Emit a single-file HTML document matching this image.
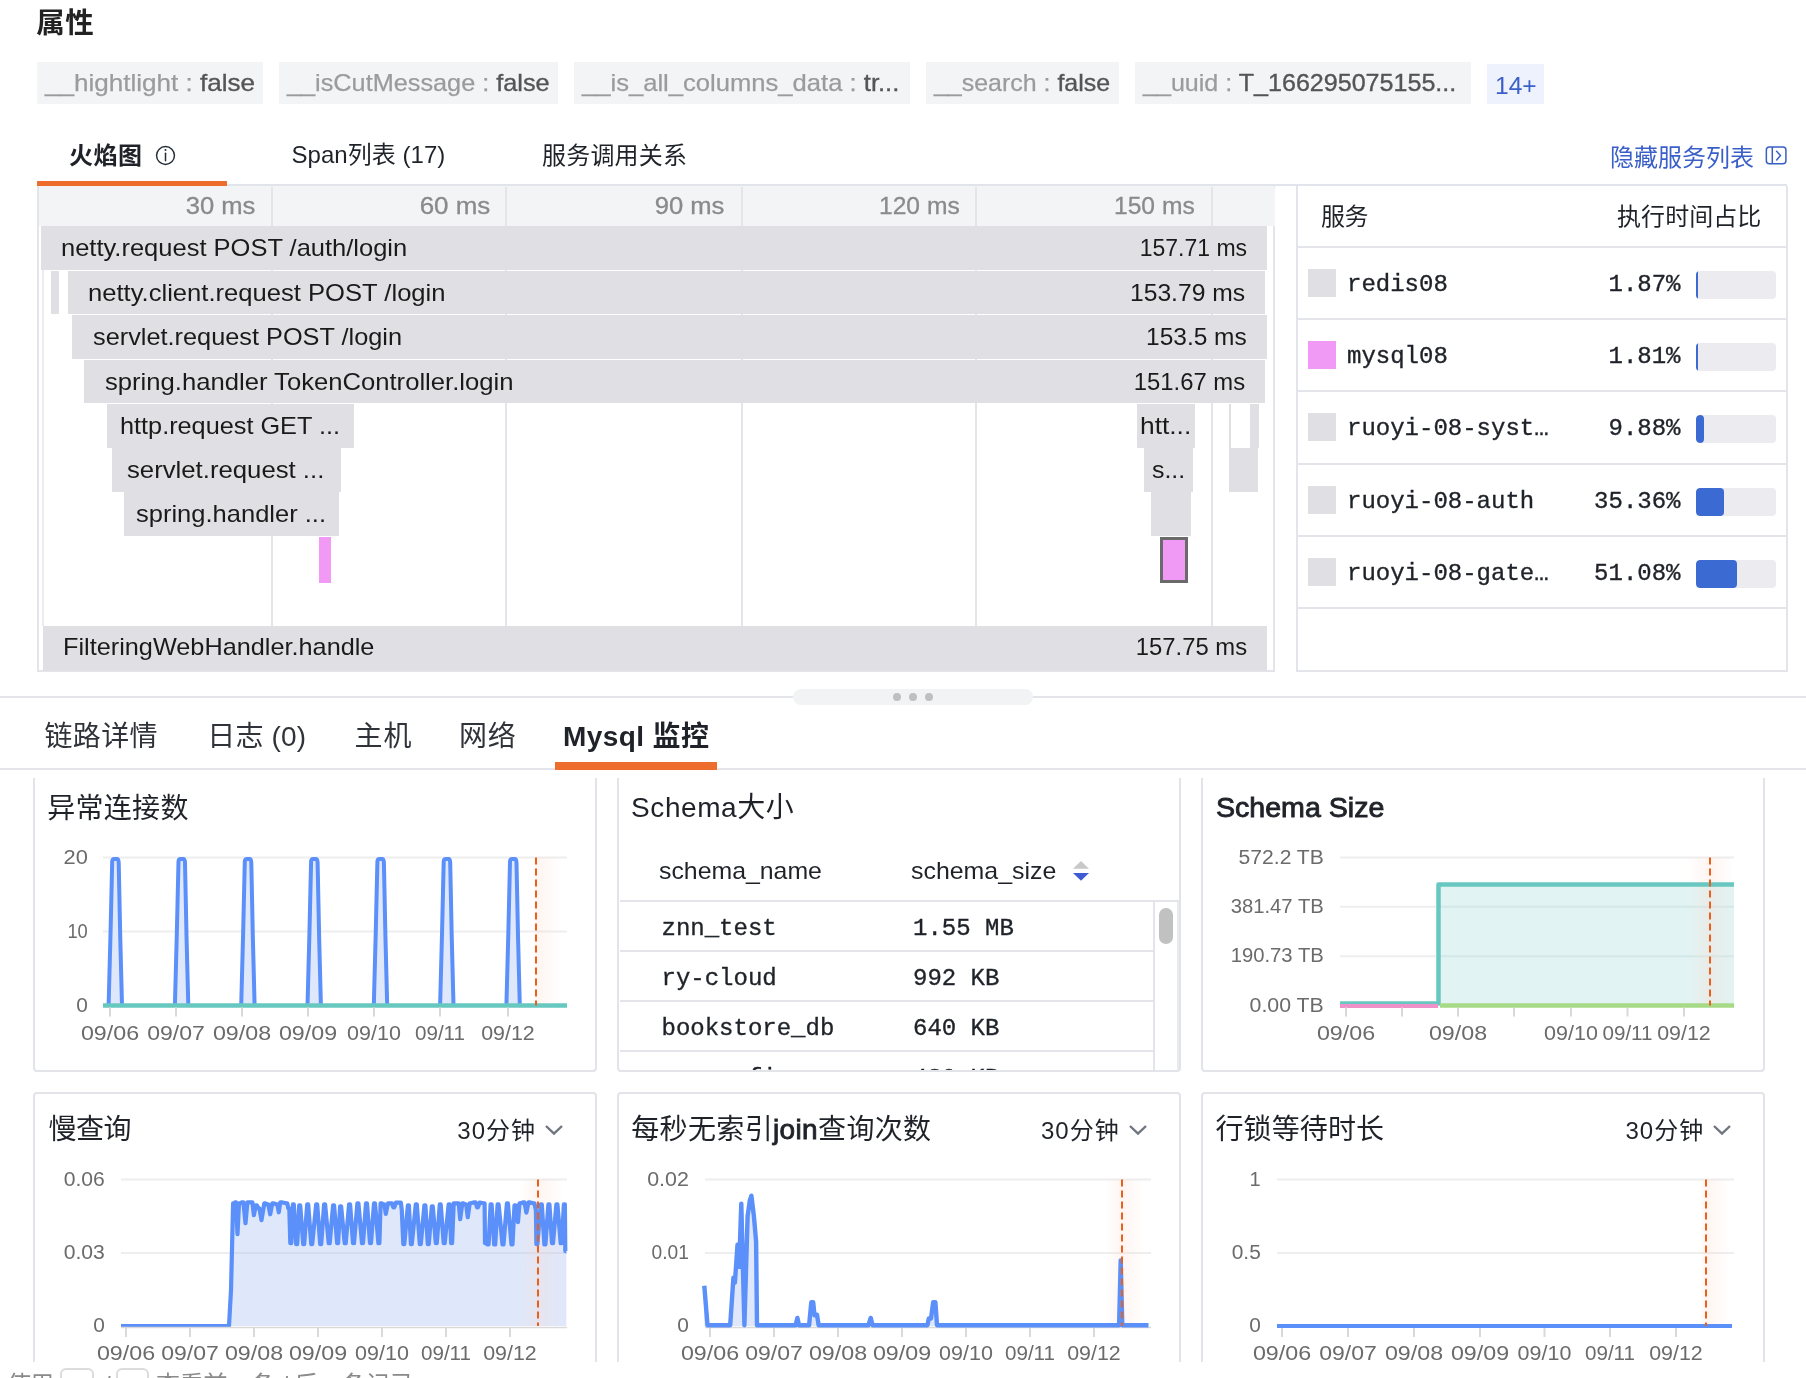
<!DOCTYPE html><html lang="zh"><head><meta charset="utf-8"><title>Trace</title><style>
*{box-sizing:border-box;margin:0;padding:0}
html,body{width:1806px;height:1378px;overflow:hidden;background:#fff}
body{position:relative;font-family:"Liberation Sans","Noto Sans CJK SC",sans-serif;color:#1f2329}
.a{position:absolute;white-space:nowrap}
.t{position:absolute;white-space:nowrap;transform-origin:0 50%}
.tr{position:absolute;white-space:nowrap;transform-origin:100% 50%}
.tag{position:absolute;top:62px;height:42px;background:#f3f4f6}
.k{color:#9b9b9b;-webkit-text-stroke:0.25px #9b9b9b} .v{color:#555;-webkit-text-stroke:0.35px #555}
.fb{position:absolute;background:#e0dfe4}
.gl{position:absolute;width:2px;background:#e4e4ea}
.mono{font-family:"Liberation Mono","DejaVu Sans Mono","Noto Sans CJK SC",monospace;-webkit-text-stroke:0.35px #1f2329}
.card{position:absolute;border:2px solid #e3e4ea;border-radius:4px;background:#fff}
.md{-webkit-text-stroke:0.9px #1f2329}
svg text{font-family:"Liberation Sans","Noto Sans CJK SC",sans-serif;font-size:20px;fill:#6b6b6b}
</style></head><body><div id="root" style="position:absolute;left:0;top:0;width:1806px;height:1378px;will-change:transform">
<div id="t1" class="t " style="top:2.5px;font-size:28.5px;line-height:40px;color:#1f2329;left:36.36px;letter-spacing:0.267px;font-weight:bold;color:#222;">属性</div>
<div class="tag" style="left:37px;width:226px"></div>
<div id="t2" class="t " style="top:63px;font-size:24px;line-height:40px;color:#1f2329;left:45.14px;transform:scaleX(1.0855);"><span class="k">__hightlight : </span><span class="v">false</span></div>
<div class="tag" style="left:279px;width:279px"></div>
<div id="t3" class="t " style="top:63px;font-size:24px;line-height:40px;color:#1f2329;left:286.94px;transform:scaleX(1.0527);"><span class="k">__isCutMessage : </span><span class="v">false</span></div>
<div class="tag" style="left:574px;width:336px"></div>
<div id="t4" class="t " style="top:63px;font-size:24px;line-height:40px;color:#1f2329;left:581.9399999999999px;transform:scaleX(1.0666);"><span class="k">__is_all_columns_data : </span><span class="v">tr...</span></div>
<div class="tag" style="left:926px;width:193px"></div>
<div id="t5" class="t " style="top:63px;font-size:24px;line-height:40px;color:#1f2329;left:934.04px;transform:scaleX(1.0394);"><span class="k">__search : </span><span class="v">false</span></div>
<div class="tag" style="left:1135px;width:336px"></div>
<div id="t6" class="t " style="top:63px;font-size:24px;line-height:40px;color:#1f2329;left:1143.14px;transform:scaleX(1.0447);"><span class="k">__uuid : </span><span class="v">T_166295075155...</span></div>
<div class="a" style="left:1487px;top:64px;width:57px;height:40px;background:#eef2fd"></div>
<div id="t7" class="t " style="top:66px;font-size:24px;line-height:40px;color:#3a5fc8;left:1494.64px;transform:scaleX(1.0246);">14+</div>
<div id="t8" class="t " style="top:138.5px;font-size:24px;line-height:34px;color:#1f2329;left:69.04px;letter-spacing:0.455px;font-weight:bold;">火焰图</div>
<svg class="a" style="left:155px;top:145px" width="22" height="22" viewBox="0 0 22 22"><circle cx="10.5" cy="10.5" r="8.95" fill="none" stroke="#252d36" stroke-width="1.45"/><line x1="10.5" y1="8.3" x2="10.5" y2="15.7" stroke="#252d36" stroke-width="1.5" stroke-linecap="round"/><circle cx="10.5" cy="5.1" r="1" fill="#252d36"/></svg>
<div id="t9" class="t " style="top:138px;font-size:24px;line-height:34px;color:#1f2329;left:291.44px;letter-spacing:0.051px;">Span列表 (17)</div>
<div id="t10" class="t " style="top:138.5px;font-size:24px;line-height:34px;color:#1f2329;left:542.04px;letter-spacing:0.184px;">服务调用关系</div>
<div id="t11" class="t " style="top:141px;font-size:24px;line-height:34px;color:#3a5fc8;left:1610.04px;letter-spacing:-0.016px;">隐藏服务列表</div>
<svg class="a" style="left:1765px;top:146px" width="22" height="20" viewBox="0 0 22 20"><rect x="1.35" y="1.05" width="19.55" height="16.7" rx="3" fill="none" stroke="#3a5fc4" stroke-width="1.5"/><line x1="7.3" y1="1.05" x2="7.3" y2="17.75" stroke="#3a5fc4" stroke-width="1.5"/><path d="M11.6 5.3 L15.5 9.6 L11.6 14" fill="none" stroke="#3a5fc4" stroke-width="1.5" stroke-linecap="round"/></svg>
<div class="a" style="left:37px;top:184px;width:1750px;height:2px;background:#e1e5eb"></div>
<div class="a" style="left:37px;top:181px;width:190px;height:5px;background:#ee6d2d"></div>
<div class="a" style="left:37px;top:186px;width:1238px;height:486px;border:2px solid #e4e5ea;border-top:none;background:#fff"></div>
<div class="a" style="left:39px;top:186px;width:1236px;height:40px;background:#f3f4f6;border-top-right-radius:3px"></div>
<div class="gl" style="left:271px;top:187px;height:483px"></div>
<div class="gl" style="left:505px;top:187px;height:483px"></div>
<div class="gl" style="left:741px;top:187px;height:483px"></div>
<div class="gl" style="left:975px;top:187px;height:483px"></div>
<div class="gl" style="left:1211px;top:187px;height:483px"></div>
<div class="gl" style="left:42px;top:270px;height:356px;background:#ececf0"></div>
<div id="t12" class="tr " style="top:186px;font-size:24px;line-height:39px;color:#8a8a8a;right:1550.6399999999999px;transform:scaleX(1.0667);-webkit-text-stroke:0.3px #8a8a8a;">30 ms</div>
<div id="t13" class="tr " style="top:186px;font-size:24px;line-height:39px;color:#8a8a8a;right:1315.6399999999999px;transform:scaleX(1.082);-webkit-text-stroke:0.3px #8a8a8a;">60 ms</div>
<div id="t14" class="tr " style="top:186px;font-size:24px;line-height:39px;color:#8a8a8a;right:1081.6399999999999px;transform:scaleX(1.0667);-webkit-text-stroke:0.3px #8a8a8a;">90 ms</div>
<div id="t15" class="tr " style="top:186px;font-size:24px;line-height:39px;color:#8a8a8a;right:846.64px;transform:scaleX(1.0256);-webkit-text-stroke:0.3px #8a8a8a;">120 ms</div>
<div id="t16" class="tr " style="top:186px;font-size:24px;line-height:39px;color:#8a8a8a;right:611.6400000000001px;transform:scaleX(1.0256);-webkit-text-stroke:0.3px #8a8a8a;">150 ms</div>
<div class="fb" style="left:41px;width:1226px;top:226.0px;height:44px"></div>
<div id="t17" class="t " style="top:226px;font-size:24px;line-height:43px;color:#1a1a1a;left:61.24px;transform:scaleX(1.0621);">netty.request POST /auth/login</div>
<div id="t18" class="tr " style="top:226px;font-size:24px;line-height:43px;color:#1a1a1a;right:559.3400000000001px;transform:scaleX(0.9584);">157.71 ms</div>
<div class="fb" style="left:51px;width:8px;top:271.0px;height:43px"></div>
<div class="fb" style="left:68px;width:1197px;top:271.0px;height:43px"></div>
<div id="t19" class="t " style="top:271px;font-size:24px;line-height:43px;color:#1a1a1a;left:88.14px;transform:scaleX(1.0663);">netty.client.request POST /login</div>
<div id="t20" class="tr " style="top:271px;font-size:24px;line-height:43px;color:#1a1a1a;right:561.24px;transform:scaleX(1.0271);">153.79 ms</div>
<div class="fb" style="left:72px;width:1195px;top:315.0px;height:44px"></div>
<div id="t21" class="t " style="top:315px;font-size:24px;line-height:43px;color:#1a1a1a;left:92.74px;transform:scaleX(1.0546);">servlet.request POST /login</div>
<div id="t22" class="tr " style="top:315px;font-size:24px;line-height:43px;color:#1a1a1a;right:559.3400000000001px;transform:scaleX(1.0193);">153.5 ms</div>
<div class="fb" style="left:84px;width:1181px;top:360.0px;height:43px"></div>
<div id="t23" class="t " style="top:360px;font-size:24px;line-height:43px;color:#1a1a1a;left:104.64px;transform:scaleX(1.0679);">spring.handler TokenController.login</div>
<div id="t24" class="tr " style="top:360px;font-size:24px;line-height:43px;color:#1a1a1a;right:561.24px;transform:scaleX(0.9932);">151.67 ms</div>
<div class="fb" style="left:107.3px;width:246.7px;top:404.0px;height:44px"></div>
<div id="t25" class="t " style="top:404px;font-size:24px;line-height:43px;color:#1a1a1a;left:120.44px;transform:scaleX(1.0527);">http.request GET ...</div>
<div class="fb" style="left:111.5px;width:229.0px;top:448.0px;height:44px"></div>
<div id="t26" class="t " style="top:448px;font-size:24px;line-height:43px;color:#1a1a1a;left:127.14px;transform:scaleX(1.0719);">servlet.request ...</div>
<div class="fb" style="left:124px;width:215.39999999999998px;top:492.0px;height:44px"></div>
<div id="t27" class="t " style="top:492px;font-size:24px;line-height:43px;color:#1a1a1a;left:136.44px;transform:scaleX(1.0629);">spring.handler ...</div>
<div class="fb" style="left:1137px;width:58px;top:404.0px;height:44px"></div>
<div id="t28" class="t " style="top:404px;font-size:24px;line-height:43px;color:#1a1a1a;left:1140.14px;transform:scaleX(1.0971);">htt...</div>
<div class="fb" style="left:1144px;width:49px;top:448.0px;height:44px"></div>
<div id="t29" class="t " style="top:448px;font-size:24px;line-height:43px;color:#1a1a1a;left:1152.14px;transform:scaleX(1.0376);">s...</div>
<div class="fb" style="left:1151.4px;width:39.59999999999991px;top:492.0px;height:44px"></div>
<div class="fb" style="left:1229px;width:2px;top:404.0px;height:44px"></div>
<div class="fb" style="left:1250px;width:9px;top:404.0px;height:44px"></div>
<div class="fb" style="left:1229px;width:29px;top:448.0px;height:44px"></div>
<div class="a" style="left:319.3px;top:537px;width:12px;height:46px;background:#f09af5"></div>
<div class="a" style="left:1160px;top:537px;width:28px;height:46px;background:#f09af5;border:3px solid #6a6a6a"></div>
<div class="fb" style="left:43px;width:1224px;top:626.0px;height:45px"></div>
<div id="t30" class="t " style="top:625px;font-size:24px;line-height:43px;color:#1a1a1a;left:63.34px;transform:scaleX(1.053);">FilteringWebHandler.handle</div>
<div id="t31" class="tr " style="top:625px;font-size:24px;line-height:43px;color:#1a1a1a;right:559.1400000000001px;transform:scaleX(0.9923);">157.75 ms</div>
<div class="a" style="left:1296px;top:186px;width:492px;height:486px;border:2px solid #e4e5ea;border-top:none;background:#fff"></div>
<div id="t32" class="t " style="top:200px;font-size:24px;line-height:34px;color:#1f2329;left:1321.04px;letter-spacing:-0.592px;">服务</div>
<div id="t33" class="t " style="top:200px;font-size:24px;line-height:34px;color:#1f2329;left:1617.04px;letter-spacing:0.062px;">执行时间占比</div>
<div class="a" style="left:1298px;top:246.0px;width:488px;height:2px;background:#e4e5ea"></div>
<div class="a" style="left:1308px;top:269.0px;width:28px;height:28px;background:#e0dfe4"></div>
<div class="a mono" style="left:1347px;top:267.0px;font-size:24px;line-height:36px;color:#1f2329">redis08</div>
<div class="a mono" style="left:1500px;width:180.5px;text-align:right;top:267.0px;font-size:24px;line-height:36px;color:#1f2329">1.87%</div>
<div class="a" style="left:1696px;top:271.0px;width:80px;height:28px;background:#ebebf0;border-radius:4px;overflow:hidden"><div style="width:1.5px;height:28px;background:#3b6ad2;border-radius:0"></div></div>
<div class="a" style="left:1298px;top:318.2px;width:488px;height:2px;background:#e4e5ea"></div>
<div class="a" style="left:1308px;top:341.2px;width:28px;height:28px;background:#f09af5"></div>
<div class="a mono" style="left:1347px;top:339.2px;font-size:24px;line-height:36px;color:#1f2329">mysql08</div>
<div class="a mono" style="left:1500px;width:180.5px;text-align:right;top:339.2px;font-size:24px;line-height:36px;color:#1f2329">1.81%</div>
<div class="a" style="left:1696px;top:343.2px;width:80px;height:28px;background:#ebebf0;border-radius:4px;overflow:hidden"><div style="width:1.5px;height:28px;background:#3b6ad2;border-radius:0"></div></div>
<div class="a" style="left:1298px;top:390.4px;width:488px;height:2px;background:#e4e5ea"></div>
<div class="a" style="left:1308px;top:413.4px;width:28px;height:28px;background:#e0dfe4"></div>
<div class="a mono" style="left:1347px;top:411.4px;font-size:24px;line-height:36px;color:#1f2329">ruoyi-08-syst…</div>
<div class="a mono" style="left:1500px;width:180.5px;text-align:right;top:411.4px;font-size:24px;line-height:36px;color:#1f2329">9.88%</div>
<div class="a" style="left:1696px;top:415.4px;width:80px;height:28px;background:#ebebf0;border-radius:4px;overflow:hidden"><div style="width:7.9px;height:28px;background:#3b6ad2;border-radius:4px"></div></div>
<div class="a" style="left:1298px;top:462.6px;width:488px;height:2px;background:#e4e5ea"></div>
<div class="a" style="left:1308px;top:485.6px;width:28px;height:28px;background:#e0dfe4"></div>
<div class="a mono" style="left:1347px;top:483.6px;font-size:24px;line-height:36px;color:#1f2329">ruoyi-08-auth</div>
<div class="a mono" style="left:1500px;width:180.5px;text-align:right;top:483.6px;font-size:24px;line-height:36px;color:#1f2329">35.36%</div>
<div class="a" style="left:1696px;top:487.6px;width:80px;height:28px;background:#ebebf0;border-radius:4px;overflow:hidden"><div style="width:28.3px;height:28px;background:#3b6ad2;border-radius:4px"></div></div>
<div class="a" style="left:1298px;top:534.8px;width:488px;height:2px;background:#e4e5ea"></div>
<div class="a" style="left:1308px;top:557.8px;width:28px;height:28px;background:#e0dfe4"></div>
<div class="a mono" style="left:1347px;top:555.8px;font-size:24px;line-height:36px;color:#1f2329">ruoyi-08-gate…</div>
<div class="a mono" style="left:1500px;width:180.5px;text-align:right;top:555.8px;font-size:24px;line-height:36px;color:#1f2329">51.08%</div>
<div class="a" style="left:1696px;top:559.8px;width:80px;height:28px;background:#ebebf0;border-radius:4px;overflow:hidden"><div style="width:40.9px;height:28px;background:#3b6ad2;border-radius:4px"></div></div>
<div class="a" style="left:1298px;top:607.0px;width:488px;height:2px;background:#e4e5ea"></div>
<div class="a" style="left:0;top:696px;width:1806px;height:2px;background:#e4e5ea"></div>
<div class="a" style="left:793px;top:689px;width:240px;height:16px;background:#f2f3f5;border-radius:8px"></div>
<div class="a" style="left:893px;top:693px;width:8px;height:8px;border-radius:4px;background:#bfbfbf"></div>
<div class="a" style="left:909px;top:693px;width:8px;height:8px;border-radius:4px;background:#bfbfbf"></div>
<div class="a" style="left:925px;top:693px;width:8px;height:8px;border-radius:4px;background:#bfbfbf"></div>
<div id="t34" class="t " style="top:717px;font-size:28px;line-height:40px;color:#30343a;left:44.38px;letter-spacing:0.412px;">链路详情</div>
<div id="t35" class="t " style="top:717px;font-size:28px;line-height:40px;color:#30343a;left:207.18px;letter-spacing:0.205px;">日志 (0)</div>
<div id="t36" class="t " style="top:717px;font-size:28px;line-height:40px;color:#30343a;left:354.48px;letter-spacing:1.038px;">主机</div>
<div id="t37" class="t " style="top:717px;font-size:28px;line-height:40px;color:#30343a;left:458.88px;letter-spacing:0.935px;">网络</div>
<div id="t38" class="t " style="top:717px;font-size:28px;line-height:40px;color:#1f2329;left:562.88px;letter-spacing:0.428px;font-weight:bold;">Mysql 监控</div>
<div class="a" style="left:0;top:768px;width:1806px;height:2px;background:#e4e5ea"></div>
<div class="a" style="left:555px;top:762px;width:162px;height:8px;background:#ee6d2d"></div>
<div class="card" style="left:33px;top:778px;width:564px;height:294px;border-top:none;border-top-left-radius:0;border-top-right-radius:0"></div>
<div class="card" style="left:33px;top:1092px;width:564px;height:300px"></div>
<div class="card" style="left:617px;top:778px;width:564px;height:294px;border-top:none;border-top-left-radius:0;border-top-right-radius:0"></div>
<div class="card" style="left:617px;top:1092px;width:564px;height:300px"></div>
<div class="card" style="left:1201px;top:778px;width:564px;height:294px;border-top:none;border-top-left-radius:0;border-top-right-radius:0"></div>
<div class="card" style="left:1201px;top:1092px;width:564px;height:300px"></div>
<div id="t39" class="t " style="top:791px;font-size:28px;line-height:36px;color:#1f2329;left:47.28px;letter-spacing:0.282px;">异常连接数</div>
<div id="t40" class="t " style="top:790px;font-size:28px;line-height:36px;color:#1f2329;left:631.08px;letter-spacing:0.574px;">Schema大小</div>
<div id="t41" class="t md" style="top:789.5px;font-size:28px;line-height:36px;color:#1f2329;left:1216.08px;transform:scaleX(1.0204);">Schema Size</div>
<div id="t42" class="t " style="top:1112px;font-size:28px;line-height:36px;color:#1f2329;left:48.480000000000004px;letter-spacing:-0.484px;">慢查询</div>
<div id="t43" class="t " style="top:1112px;font-size:28px;line-height:36px;color:#1f2329;left:631.28px;letter-spacing:0.353px;">每秒无索引<span class="md">join</span>查询次数</div>
<div id="t44" class="t " style="top:1112px;font-size:28px;line-height:36px;color:#1f2329;left:1215.38px;letter-spacing:0.145px;">行锁等待时长</div>
<div id="t45" class="t " style="top:1115.5px;font-size:24px;line-height:30px;color:#1f2329;left:457.34000000000003px;letter-spacing:0.974px;">30分钟</div>
<svg class="a" style="left:543.5px;top:1123px" width="20" height="14" viewBox="0 0 20 14"><path d="M2 3 L10 10.7 L18 3" fill="none" stroke="#6f7680" stroke-width="2.4"/></svg>
<div id="t46" class="t " style="top:1115.5px;font-size:24px;line-height:30px;color:#1f2329;left:1041.04px;letter-spacing:0.974px;">30分钟</div>
<svg class="a" style="left:1127.5px;top:1123px" width="20" height="14" viewBox="0 0 20 14"><path d="M2 3 L10 10.7 L18 3" fill="none" stroke="#6f7680" stroke-width="2.4"/></svg>
<div id="t47" class="t " style="top:1115.5px;font-size:24px;line-height:30px;color:#1f2329;left:1625.54px;letter-spacing:0.974px;">30分钟</div>
<svg class="a" style="left:1711.5px;top:1123px" width="20" height="14" viewBox="0 0 20 14"><path d="M2 3 L10 10.7 L18 3" fill="none" stroke="#6f7680" stroke-width="2.4"/></svg>
<svg class="a" style="left:0;top:0" width="1806" height="1378" viewBox="0 0 1806 1378"><line x1="103" y1="857.5" x2="567" y2="857.5" stroke="#eeeeee" stroke-width="2"/><line x1="103" y1="931.5" x2="567" y2="931.5" stroke="#eeeeee" stroke-width="2"/><text x="87.8" y="863.5" text-anchor="end" textLength="24.3" lengthAdjust="spacingAndGlyphs">20</text><text x="87.8" y="937.5" text-anchor="end" textLength="20.4" lengthAdjust="spacingAndGlyphs">10</text><text x="87.8" y="1011.5" text-anchor="end" textLength="11.6" lengthAdjust="spacingAndGlyphs">0</text><defs><linearGradient id="g536" x1="0" x2="1" y1="0" y2="0"><stop offset="0" stop-color="#fbd9cc" stop-opacity="0"/><stop offset="0.07" stop-color="#fbd9cc" stop-opacity="0.28"/><stop offset="1" stop-color="#fbd9cc" stop-opacity="0"/></linearGradient></defs><rect x="534" y="857.5" width="28" height="148.0" fill="url(#g536)"/><path d="M108.6 1005.5 L110.6 930.5 L112.2 861.5 Q112.4 859.0 114.4 859.0 L116.9 859.0 Q118.5 859.0 118.7 862.5 L120.2 935.5 L122.0 1005.5 Z" fill="#dfe8fb"/><path d="M108.6 1005.5 L110.6 930.5 L112.2 861.5 Q112.4 859.0 114.4 859.0 L116.9 859.0 Q118.5 859.0 118.7 862.5 L120.2 935.5 L122.0 1005.5" fill="none" stroke="#5b8ff9" stroke-width="4" stroke-linejoin="round"/><path d="M174.9 1005.5 L176.9 930.5 L178.5 861.5 Q178.7 859.0 180.7 859.0 L183.2 859.0 Q184.8 859.0 185.0 862.5 L186.5 935.5 L188.3 1005.5 Z" fill="#dfe8fb"/><path d="M174.9 1005.5 L176.9 930.5 L178.5 861.5 Q178.7 859.0 180.7 859.0 L183.2 859.0 Q184.8 859.0 185.0 862.5 L186.5 935.5 L188.3 1005.5" fill="none" stroke="#5b8ff9" stroke-width="4" stroke-linejoin="round"/><path d="M241.2 1005.5 L243.2 930.5 L244.8 861.5 Q245.0 859.0 247.0 859.0 L249.5 859.0 Q251.1 859.0 251.3 862.5 L252.8 935.5 L254.6 1005.5 Z" fill="#dfe8fb"/><path d="M241.2 1005.5 L243.2 930.5 L244.8 861.5 Q245.0 859.0 247.0 859.0 L249.5 859.0 Q251.1 859.0 251.3 862.5 L252.8 935.5 L254.6 1005.5" fill="none" stroke="#5b8ff9" stroke-width="4" stroke-linejoin="round"/><path d="M307.5 1005.5 L309.5 930.5 L311.1 861.5 Q311.3 859.0 313.3 859.0 L315.8 859.0 Q317.4 859.0 317.6 862.5 L319.1 935.5 L320.9 1005.5 Z" fill="#dfe8fb"/><path d="M307.5 1005.5 L309.5 930.5 L311.1 861.5 Q311.3 859.0 313.3 859.0 L315.8 859.0 Q317.4 859.0 317.6 862.5 L319.1 935.5 L320.9 1005.5" fill="none" stroke="#5b8ff9" stroke-width="4" stroke-linejoin="round"/><path d="M373.8 1005.5 L375.8 930.5 L377.4 861.5 Q377.6 859.0 379.6 859.0 L382.1 859.0 Q383.7 859.0 383.9 862.5 L385.4 935.5 L387.2 1005.5 Z" fill="#dfe8fb"/><path d="M373.8 1005.5 L375.8 930.5 L377.4 861.5 Q377.6 859.0 379.6 859.0 L382.1 859.0 Q383.7 859.0 383.9 862.5 L385.4 935.5 L387.2 1005.5" fill="none" stroke="#5b8ff9" stroke-width="4" stroke-linejoin="round"/><path d="M440.1 1005.5 L442.1 930.5 L443.7 861.5 Q443.9 859.0 445.9 859.0 L448.4 859.0 Q450.0 859.0 450.2 862.5 L451.7 935.5 L453.5 1005.5 Z" fill="#dfe8fb"/><path d="M440.1 1005.5 L442.1 930.5 L443.7 861.5 Q443.9 859.0 445.9 859.0 L448.4 859.0 Q450.0 859.0 450.2 862.5 L451.7 935.5 L453.5 1005.5" fill="none" stroke="#5b8ff9" stroke-width="4" stroke-linejoin="round"/><path d="M506.4 1005.5 L508.4 930.5 L510.0 861.5 Q510.2 859.0 512.2 859.0 L514.7 859.0 Q516.3 859.0 516.5 862.5 L518.0 935.5 L519.8 1005.5 Z" fill="#dfe8fb"/><path d="M506.4 1005.5 L508.4 930.5 L510.0 861.5 Q510.2 859.0 512.2 859.0 L514.7 859.0 Q516.3 859.0 516.5 862.5 L518.0 935.5 L519.8 1005.5" fill="none" stroke="#5b8ff9" stroke-width="4" stroke-linejoin="round"/><line x1="103" y1="1005.5" x2="567" y2="1005.5" stroke="#67c8c0" stroke-width="4.5"/><line x1="110" y1="1007.5" x2="110" y2="1016.5" stroke="#d9d9d9" stroke-width="2"/><text x="110" y="1040" text-anchor="middle" textLength="58.2" lengthAdjust="spacingAndGlyphs">09/06</text><line x1="176" y1="1007.5" x2="176" y2="1016.5" stroke="#d9d9d9" stroke-width="2"/><text x="176" y="1040" text-anchor="middle" textLength="57.6" lengthAdjust="spacingAndGlyphs">09/07</text><line x1="242" y1="1007.5" x2="242" y2="1016.5" stroke="#d9d9d9" stroke-width="2"/><text x="242" y="1040" text-anchor="middle" textLength="58.2" lengthAdjust="spacingAndGlyphs">09/08</text><line x1="308" y1="1007.5" x2="308" y2="1016.5" stroke="#d9d9d9" stroke-width="2"/><text x="308" y="1040" text-anchor="middle" textLength="58.2" lengthAdjust="spacingAndGlyphs">09/09</text><line x1="374" y1="1007.5" x2="374" y2="1016.5" stroke="#d9d9d9" stroke-width="2"/><text x="374" y="1040" text-anchor="middle" textLength="53.8" lengthAdjust="spacingAndGlyphs">09/10</text><line x1="440" y1="1007.5" x2="440" y2="1016.5" stroke="#d9d9d9" stroke-width="2"/><text x="440" y="1040" text-anchor="middle" textLength="50.1" lengthAdjust="spacingAndGlyphs">09/11</text><line x1="508" y1="1007.5" x2="508" y2="1016.5" stroke="#d9d9d9" stroke-width="2"/><text x="508" y="1040" text-anchor="middle" textLength="53.6" lengthAdjust="spacingAndGlyphs">09/12</text><line x1="536" y1="857.5" x2="536" y2="1005.5" stroke="#e8601c" stroke-width="2" stroke-dasharray="7 4"/><path d="M1438.5 1005.5 L1438.5 884.5 L1734 884.5 L1734 1005.5 Z" fill="#e2f3f3"/><line x1="1340" y1="857.5" x2="1734" y2="857.5" stroke="#eeeeee" stroke-width="2"/><line x1="1340" y1="906.7" x2="1438" y2="906.7" stroke="#eeeeee" stroke-width="2"/><line x1="1438" y1="906.7" x2="1734" y2="906.7" stroke="#d3e8e8" stroke-width="2"/><line x1="1340" y1="956.3" x2="1438" y2="956.3" stroke="#eeeeee" stroke-width="2"/><line x1="1438" y1="956.3" x2="1734" y2="956.3" stroke="#d3e8e8" stroke-width="2"/><text x="1323.8" y="863.5" text-anchor="end" textLength="85.2" lengthAdjust="spacingAndGlyphs">572.2 TB</text><text x="1323.8" y="912.7" text-anchor="end" textLength="93.1" lengthAdjust="spacingAndGlyphs">381.47 TB</text><text x="1323.8" y="962.3" text-anchor="end" textLength="93.1" lengthAdjust="spacingAndGlyphs">190.73 TB</text><text x="1323.8" y="1011.5" text-anchor="end" textLength="74.2" lengthAdjust="spacingAndGlyphs">0.00 TB</text><defs><linearGradient id="g1710" x1="0" x2="1" y1="0" y2="0"><stop offset="0" stop-color="#fbd9cc" stop-opacity="0"/><stop offset="0.48" stop-color="#fbd9cc" stop-opacity="0.28"/><stop offset="1" stop-color="#fbd9cc" stop-opacity="0"/></linearGradient></defs><rect x="1688" y="857.5" width="46" height="148.0" fill="url(#g1710)"/><path d="M1340 1003.5 L1438.5 1003.5 L1438.5 884.5 L1734 884.5" fill="none" stroke="#68c7c0" stroke-width="4.5" stroke-linejoin="round"/><line x1="1340" y1="1006" x2="1438" y2="1006" stroke="#f191c9" stroke-width="4"/><line x1="1440" y1="1005.5" x2="1734" y2="1005.5" stroke="#a6da86" stroke-width="4.5"/><line x1="1346" y1="1007.5" x2="1346" y2="1016.5" stroke="#d9d9d9" stroke-width="2"/><text x="1346" y="1040" text-anchor="middle" textLength="58.2" lengthAdjust="spacingAndGlyphs">09/06</text><line x1="1402" y1="1007.5" x2="1402" y2="1016.5" stroke="#d9d9d9" stroke-width="2"/><line x1="1458" y1="1007.5" x2="1458" y2="1016.5" stroke="#d9d9d9" stroke-width="2"/><text x="1458" y="1040" text-anchor="middle" textLength="58.2" lengthAdjust="spacingAndGlyphs">09/08</text><line x1="1514" y1="1007.5" x2="1514" y2="1016.5" stroke="#d9d9d9" stroke-width="2"/><line x1="1571" y1="1007.5" x2="1571" y2="1016.5" stroke="#d9d9d9" stroke-width="2"/><text x="1571" y="1040" text-anchor="middle" textLength="53.8" lengthAdjust="spacingAndGlyphs">09/10</text><line x1="1627.5" y1="1007.5" x2="1627.5" y2="1016.5" stroke="#d9d9d9" stroke-width="2"/><text x="1627.5" y="1040" text-anchor="middle" textLength="50.1" lengthAdjust="spacingAndGlyphs">09/11</text><line x1="1684" y1="1007.5" x2="1684" y2="1016.5" stroke="#d9d9d9" stroke-width="2"/><text x="1684" y="1040" text-anchor="middle" textLength="53.6" lengthAdjust="spacingAndGlyphs">09/12</text><line x1="1710" y1="857.5" x2="1710" y2="1005.5" stroke="#e8601c" stroke-width="2" stroke-dasharray="7 4"/><line x1="121" y1="1179.5" x2="567" y2="1179.5" stroke="#eeeeee" stroke-width="2"/><line x1="121" y1="1253" x2="567" y2="1253" stroke="#eeeeee" stroke-width="2"/><text x="104.8" y="1185.5" text-anchor="end" textLength="41.1" lengthAdjust="spacingAndGlyphs">0.06</text><text x="104.8" y="1259" text-anchor="end" textLength="41.1" lengthAdjust="spacingAndGlyphs">0.03</text><text x="104.8" y="1332" text-anchor="end" textLength="11.6" lengthAdjust="spacingAndGlyphs">0</text><path d="M121.0 1326.0 L229.0 1326.0 L231.0 1290.0 L233.1 1203.3 L234.1 1203.3 L235.0 1202.3 L236.0 1202.3 L237.5 1234.2 L239.0 1203.3 L240.0 1203.3 L242.4 1202.3 L243.4 1202.3 L245.5 1223.2 L247.4 1202.3 L248.4 1202.3 L251.4 1202.3 L252.4 1202.3 L253.9 1215.2 L255.8 1205.3 L256.8 1205.3 L258.4 1208.3 L259.4 1208.3 L261.5 1220.2 L264.3 1203.3 L265.3 1203.3 L267.3 1204.3 L268.3 1204.3 L270.2 1214.3 L272.3 1203.3 L273.3 1203.3 L276.3 1204.3 L277.3 1204.3 L278.8 1212.3 L280.3 1202.3 L281.3 1202.3 L286.3 1203.3 L287.3 1203.3 L288.3 1208.3 L289.3 1208.3 L290.3 1243.2 L291.3 1243.2 L292.9 1204.3 L293.8 1204.3 L296.2 1244.1 L297.2 1244.1 L299.2 1205.3 L300.2 1205.3 L303.2 1244.1 L304.2 1244.1 L307.2 1204.3 L308.2 1204.3 L311.2 1244.1 L312.2 1244.1 L316.2 1204.3 L317.2 1204.3 L320.2 1244.1 L321.2 1244.1 L324.1 1204.3 L325.1 1204.3 L328.7 1243.2 L329.7 1243.2 L333.1 1205.3 L334.1 1205.3 L337.1 1243.2 L338.1 1243.2 L340.1 1206.3 L341.1 1206.3 L344.7 1243.2 L345.7 1243.2 L349.1 1204.3 L350.1 1204.3 L353.0 1243.2 L354.0 1243.2 L357.4 1203.3 L358.4 1203.3 L362.0 1243.2 L363.0 1243.2 L366.0 1203.3 L367.0 1203.3 L370.0 1243.2 L371.0 1243.2 L374.0 1203.3 L375.0 1203.3 L378.4 1243.2 L379.4 1243.2 L380.6 1203.3 L381.6 1203.3 L383.3 1204.3 L384.3 1204.3 L385.8 1213.9 L387.9 1203.3 L388.9 1203.3 L390.9 1203.3 L391.9 1203.3 L393.3 1207.3 L394.3 1207.3 L395.9 1202.7 L396.9 1202.7 L399.9 1202.7 L400.9 1202.7 L401.8 1210.3 L403.3 1244.1 L404.3 1244.1 L407.9 1205.3 L408.9 1205.3 L410.9 1244.1 L411.8 1244.1 L415.8 1204.3 L416.8 1204.3 L419.8 1244.1 L420.8 1244.1 L424.4 1205.3 L425.4 1205.3 L427.8 1244.1 L428.8 1244.1 L431.8 1206.3 L432.8 1206.3 L435.8 1243.2 L436.8 1243.2 L439.8 1204.3 L440.7 1204.3 L443.7 1243.2 L444.7 1243.2 L448.7 1204.3 L449.7 1204.3 L451.1 1243.2 L452.1 1243.2 L453.7 1203.3 L454.7 1203.3 L457.7 1203.3 L458.7 1203.3 L460.2 1219.2 L462.3 1203.3 L463.3 1203.3 L465.1 1204.3 L466.1 1204.3 L467.8 1217.2 L469.7 1203.3 L470.6 1203.3 L474.6 1202.3 L475.6 1202.3 L477.0 1207.3 L478.0 1207.3 L479.6 1202.7 L480.6 1202.7 L483.6 1203.3 L484.6 1203.3 L485.0 1243.2 L486.0 1243.2 L487.6 1244.5 L488.6 1244.5 L490.6 1204.3 L491.6 1204.3 L494.2 1244.5 L495.2 1244.5 L497.6 1204.3 L498.6 1204.3 L502.5 1244.5 L503.5 1244.5 L506.9 1203.3 L507.9 1203.3 L511.5 1244.5 L512.5 1244.5 L514.5 1205.3 L515.5 1205.3 L518.0 1222.2 L519.5 1203.3 L520.5 1203.3 L523.5 1202.3 L524.5 1202.3 L526.4 1212.7 L528.5 1202.3 L529.4 1202.3 L533.4 1203.3 L534.4 1203.3 L535.9 1210.3 L536.4 1244.1 L537.4 1244.1 L540.8 1204.3 L541.8 1204.3 L544.4 1244.5 L545.4 1244.5 L548.4 1204.3 L549.4 1204.3 L552.0 1243.2 L553.0 1243.2 L556.4 1204.3 L557.4 1204.3 L560.7 1243.2 L561.7 1243.2 L563.9 1204.3 L564.9 1204.3 L565.3 1251.1 L566.3 1251.1 L566.3 1326 L121 1326 Z" fill="#dfe8fb"/><line x1="231" y1="1253" x2="567" y2="1253" stroke="#d5dcee" stroke-width="2"/><defs><linearGradient id="g538" x1="0" x2="1" y1="0" y2="0"><stop offset="0" stop-color="#fbd9cc" stop-opacity="0"/><stop offset="0.41" stop-color="#fbd9cc" stop-opacity="0.28"/><stop offset="1" stop-color="#fbd9cc" stop-opacity="0"/></linearGradient></defs><rect x="520" y="1179.5" width="44" height="146.5" fill="url(#g538)"/><path d="M121.0 1326.0 L229.0 1326.0 L231.0 1290.0 L233.1 1203.3 L234.1 1203.3 L235.0 1202.3 L236.0 1202.3 L237.5 1234.2 L239.0 1203.3 L240.0 1203.3 L242.4 1202.3 L243.4 1202.3 L245.5 1223.2 L247.4 1202.3 L248.4 1202.3 L251.4 1202.3 L252.4 1202.3 L253.9 1215.2 L255.8 1205.3 L256.8 1205.3 L258.4 1208.3 L259.4 1208.3 L261.5 1220.2 L264.3 1203.3 L265.3 1203.3 L267.3 1204.3 L268.3 1204.3 L270.2 1214.3 L272.3 1203.3 L273.3 1203.3 L276.3 1204.3 L277.3 1204.3 L278.8 1212.3 L280.3 1202.3 L281.3 1202.3 L286.3 1203.3 L287.3 1203.3 L288.3 1208.3 L289.3 1208.3 L290.3 1243.2 L291.3 1243.2 L292.9 1204.3 L293.8 1204.3 L296.2 1244.1 L297.2 1244.1 L299.2 1205.3 L300.2 1205.3 L303.2 1244.1 L304.2 1244.1 L307.2 1204.3 L308.2 1204.3 L311.2 1244.1 L312.2 1244.1 L316.2 1204.3 L317.2 1204.3 L320.2 1244.1 L321.2 1244.1 L324.1 1204.3 L325.1 1204.3 L328.7 1243.2 L329.7 1243.2 L333.1 1205.3 L334.1 1205.3 L337.1 1243.2 L338.1 1243.2 L340.1 1206.3 L341.1 1206.3 L344.7 1243.2 L345.7 1243.2 L349.1 1204.3 L350.1 1204.3 L353.0 1243.2 L354.0 1243.2 L357.4 1203.3 L358.4 1203.3 L362.0 1243.2 L363.0 1243.2 L366.0 1203.3 L367.0 1203.3 L370.0 1243.2 L371.0 1243.2 L374.0 1203.3 L375.0 1203.3 L378.4 1243.2 L379.4 1243.2 L380.6 1203.3 L381.6 1203.3 L383.3 1204.3 L384.3 1204.3 L385.8 1213.9 L387.9 1203.3 L388.9 1203.3 L390.9 1203.3 L391.9 1203.3 L393.3 1207.3 L394.3 1207.3 L395.9 1202.7 L396.9 1202.7 L399.9 1202.7 L400.9 1202.7 L401.8 1210.3 L403.3 1244.1 L404.3 1244.1 L407.9 1205.3 L408.9 1205.3 L410.9 1244.1 L411.8 1244.1 L415.8 1204.3 L416.8 1204.3 L419.8 1244.1 L420.8 1244.1 L424.4 1205.3 L425.4 1205.3 L427.8 1244.1 L428.8 1244.1 L431.8 1206.3 L432.8 1206.3 L435.8 1243.2 L436.8 1243.2 L439.8 1204.3 L440.7 1204.3 L443.7 1243.2 L444.7 1243.2 L448.7 1204.3 L449.7 1204.3 L451.1 1243.2 L452.1 1243.2 L453.7 1203.3 L454.7 1203.3 L457.7 1203.3 L458.7 1203.3 L460.2 1219.2 L462.3 1203.3 L463.3 1203.3 L465.1 1204.3 L466.1 1204.3 L467.8 1217.2 L469.7 1203.3 L470.6 1203.3 L474.6 1202.3 L475.6 1202.3 L477.0 1207.3 L478.0 1207.3 L479.6 1202.7 L480.6 1202.7 L483.6 1203.3 L484.6 1203.3 L485.0 1243.2 L486.0 1243.2 L487.6 1244.5 L488.6 1244.5 L490.6 1204.3 L491.6 1204.3 L494.2 1244.5 L495.2 1244.5 L497.6 1204.3 L498.6 1204.3 L502.5 1244.5 L503.5 1244.5 L506.9 1203.3 L507.9 1203.3 L511.5 1244.5 L512.5 1244.5 L514.5 1205.3 L515.5 1205.3 L518.0 1222.2 L519.5 1203.3 L520.5 1203.3 L523.5 1202.3 L524.5 1202.3 L526.4 1212.7 L528.5 1202.3 L529.4 1202.3 L533.4 1203.3 L534.4 1203.3 L535.9 1210.3 L536.4 1244.1 L537.4 1244.1 L540.8 1204.3 L541.8 1204.3 L544.4 1244.5 L545.4 1244.5 L548.4 1204.3 L549.4 1204.3 L552.0 1243.2 L553.0 1243.2 L556.4 1204.3 L557.4 1204.3 L560.7 1243.2 L561.7 1243.2 L563.9 1204.3 L564.9 1204.3 L565.3 1251.1 L566.3 1251.1" fill="none" stroke="#5b8ff9" stroke-width="4.2" stroke-linejoin="round"/><line x1="121" y1="1327.5" x2="567" y2="1327.5" stroke="#d9d9d9" stroke-width="1.5"/><line x1="126" y1="1328" x2="126" y2="1337" stroke="#d9d9d9" stroke-width="2"/><text x="126" y="1359.5" text-anchor="middle" textLength="58.2" lengthAdjust="spacingAndGlyphs">09/06</text><line x1="190" y1="1328" x2="190" y2="1337" stroke="#d9d9d9" stroke-width="2"/><text x="190" y="1359.5" text-anchor="middle" textLength="57.6" lengthAdjust="spacingAndGlyphs">09/07</text><line x1="254" y1="1328" x2="254" y2="1337" stroke="#d9d9d9" stroke-width="2"/><text x="254" y="1359.5" text-anchor="middle" textLength="58.2" lengthAdjust="spacingAndGlyphs">09/08</text><line x1="318" y1="1328" x2="318" y2="1337" stroke="#d9d9d9" stroke-width="2"/><text x="318" y="1359.5" text-anchor="middle" textLength="58.2" lengthAdjust="spacingAndGlyphs">09/09</text><line x1="382" y1="1328" x2="382" y2="1337" stroke="#d9d9d9" stroke-width="2"/><text x="382" y="1359.5" text-anchor="middle" textLength="53.8" lengthAdjust="spacingAndGlyphs">09/10</text><line x1="446" y1="1328" x2="446" y2="1337" stroke="#d9d9d9" stroke-width="2"/><text x="446" y="1359.5" text-anchor="middle" textLength="50.1" lengthAdjust="spacingAndGlyphs">09/11</text><line x1="510" y1="1328" x2="510" y2="1337" stroke="#d9d9d9" stroke-width="2"/><text x="510" y="1359.5" text-anchor="middle" textLength="53.6" lengthAdjust="spacingAndGlyphs">09/12</text><line x1="538" y1="1179.5" x2="538" y2="1326" stroke="#e8601c" stroke-width="2" stroke-dasharray="7 4"/><line x1="705" y1="1179.5" x2="1151" y2="1179.5" stroke="#eeeeee" stroke-width="2"/><line x1="705" y1="1253" x2="1151" y2="1253" stroke="#eeeeee" stroke-width="2"/><text x="688.8" y="1185.5" text-anchor="end" textLength="41.6" lengthAdjust="spacingAndGlyphs">0.02</text><text x="688.8" y="1259" text-anchor="end" textLength="37.3" lengthAdjust="spacingAndGlyphs">0.01</text><text x="688.8" y="1332" text-anchor="end" textLength="11.6" lengthAdjust="spacingAndGlyphs">0</text><defs><linearGradient id="g1122" x1="0" x2="1" y1="0" y2="0"><stop offset="0" stop-color="#fbd9cc" stop-opacity="0"/><stop offset="0.42" stop-color="#fbd9cc" stop-opacity="0.28"/><stop offset="1" stop-color="#fbd9cc" stop-opacity="0"/></linearGradient></defs><rect x="1106" y="1179.5" width="38" height="146.5" fill="url(#g1122)"/><path d="M704.3 1285.7 L707.5 1325.2 L730.2 1325.2 L733.4 1277.8 L734.9 1282.6 L737.5 1244.7 L739.1 1266.8 L741.3 1203.6 L744.4 1325.2 L747.6 1216.3 L749.8 1200.5 L751.4 1195.7 L753.9 1216.3 L756.1 1241.5 L757.0 1325.2 L795.6 1325.2 L797.4 1317.9 L799.0 1325.2 L809.1 1325.2 L811.3 1302.1 L813.2 1302.1 L814.5 1315.4 L817.0 1314.7 L818.6 1325.2 L868.5 1325.2 L870.7 1317.9 L872.6 1325.2 L927.5 1325.2 L928.8 1318.5 L931.0 1318.5 L933.2 1302.1 L935.4 1302.1 L937.0 1325.2 L1119.1 1325.2 L1120.7 1260.5 L1122.3 1325.2 L1148.5 1325.2 L1148.5 1326 L704.3 1326 Z" fill="#dfe8fb"/><line x1="705" y1="1327.5" x2="1151" y2="1327.5" stroke="#d9d9d9" stroke-width="1.5"/><path d="M704.3 1285.7 L707.5 1325.2 L730.2 1325.2 L733.4 1277.8 L734.9 1282.6 L737.5 1244.7 L739.1 1266.8 L741.3 1203.6 L744.4 1325.2 L747.6 1216.3 L749.8 1200.5 L751.4 1195.7 L753.9 1216.3 L756.1 1241.5 L757.0 1325.2 L795.6 1325.2 L797.4 1317.9 L799.0 1325.2 L809.1 1325.2 L811.3 1302.1 L813.2 1302.1 L814.5 1315.4 L817.0 1314.7 L818.6 1325.2 L868.5 1325.2 L870.7 1317.9 L872.6 1325.2 L927.5 1325.2 L928.8 1318.5 L931.0 1318.5 L933.2 1302.1 L935.4 1302.1 L937.0 1325.2 L1119.1 1325.2 L1120.7 1260.5 L1122.3 1325.2 L1148.5 1325.2" fill="none" stroke="#5b8ff9" stroke-width="4.4" stroke-linejoin="round"/><line x1="710" y1="1328" x2="710" y2="1337" stroke="#d9d9d9" stroke-width="2"/><text x="710" y="1359.5" text-anchor="middle" textLength="58.2" lengthAdjust="spacingAndGlyphs">09/06</text><line x1="774" y1="1328" x2="774" y2="1337" stroke="#d9d9d9" stroke-width="2"/><text x="774" y="1359.5" text-anchor="middle" textLength="57.6" lengthAdjust="spacingAndGlyphs">09/07</text><line x1="838" y1="1328" x2="838" y2="1337" stroke="#d9d9d9" stroke-width="2"/><text x="838" y="1359.5" text-anchor="middle" textLength="58.2" lengthAdjust="spacingAndGlyphs">09/08</text><line x1="902" y1="1328" x2="902" y2="1337" stroke="#d9d9d9" stroke-width="2"/><text x="902" y="1359.5" text-anchor="middle" textLength="58.2" lengthAdjust="spacingAndGlyphs">09/09</text><line x1="966" y1="1328" x2="966" y2="1337" stroke="#d9d9d9" stroke-width="2"/><text x="966" y="1359.5" text-anchor="middle" textLength="53.8" lengthAdjust="spacingAndGlyphs">09/10</text><line x1="1030" y1="1328" x2="1030" y2="1337" stroke="#d9d9d9" stroke-width="2"/><text x="1030" y="1359.5" text-anchor="middle" textLength="50.1" lengthAdjust="spacingAndGlyphs">09/11</text><line x1="1094" y1="1328" x2="1094" y2="1337" stroke="#d9d9d9" stroke-width="2"/><text x="1094" y="1359.5" text-anchor="middle" textLength="53.6" lengthAdjust="spacingAndGlyphs">09/12</text><line x1="1122" y1="1179.5" x2="1122" y2="1326" stroke="#e8601c" stroke-width="2" stroke-dasharray="7 4"/><line x1="1277" y1="1179.5" x2="1734" y2="1179.5" stroke="#eeeeee" stroke-width="2"/><line x1="1277" y1="1253" x2="1734" y2="1253" stroke="#eeeeee" stroke-width="2"/><text x="1260.5" y="1185.5" text-anchor="end">1</text><text x="1260.8" y="1259" text-anchor="end" textLength="29.1" lengthAdjust="spacingAndGlyphs">0.5</text><text x="1260.8" y="1332" text-anchor="end" textLength="11.6" lengthAdjust="spacingAndGlyphs">0</text><defs><linearGradient id="g1706" x1="0" x2="1" y1="0" y2="0"><stop offset="0" stop-color="#fbd9cc" stop-opacity="0"/><stop offset="0.20" stop-color="#fbd9cc" stop-opacity="0.28"/><stop offset="1" stop-color="#fbd9cc" stop-opacity="0"/></linearGradient></defs><rect x="1700" y="1179.5" width="30" height="146.5" fill="url(#g1706)"/><line x1="1277" y1="1326" x2="1732" y2="1326" stroke="#5b8ff9" stroke-width="4"/><line x1="1282" y1="1328" x2="1282" y2="1337" stroke="#d9d9d9" stroke-width="2"/><text x="1282" y="1359.5" text-anchor="middle" textLength="58.2" lengthAdjust="spacingAndGlyphs">09/06</text><line x1="1348" y1="1328" x2="1348" y2="1337" stroke="#d9d9d9" stroke-width="2"/><text x="1348" y="1359.5" text-anchor="middle" textLength="57.6" lengthAdjust="spacingAndGlyphs">09/07</text><line x1="1414" y1="1328" x2="1414" y2="1337" stroke="#d9d9d9" stroke-width="2"/><text x="1414" y="1359.5" text-anchor="middle" textLength="58.2" lengthAdjust="spacingAndGlyphs">09/08</text><line x1="1480" y1="1328" x2="1480" y2="1337" stroke="#d9d9d9" stroke-width="2"/><text x="1480" y="1359.5" text-anchor="middle" textLength="58.2" lengthAdjust="spacingAndGlyphs">09/09</text><line x1="1544.5" y1="1328" x2="1544.5" y2="1337" stroke="#d9d9d9" stroke-width="2"/><text x="1544.5" y="1359.5" text-anchor="middle" textLength="53.8" lengthAdjust="spacingAndGlyphs">09/10</text><line x1="1610" y1="1328" x2="1610" y2="1337" stroke="#d9d9d9" stroke-width="2"/><text x="1610" y="1359.5" text-anchor="middle" textLength="50.1" lengthAdjust="spacingAndGlyphs">09/11</text><line x1="1676" y1="1328" x2="1676" y2="1337" stroke="#d9d9d9" stroke-width="2"/><text x="1676" y="1359.5" text-anchor="middle" textLength="53.6" lengthAdjust="spacingAndGlyphs">09/12</text><line x1="1706" y1="1179.5" x2="1706" y2="1326" stroke="#e8601c" stroke-width="2" stroke-dasharray="7 4"/></svg>
<div id="t48" class="t " style="top:854px;font-size:24px;line-height:34px;color:#1f2329;left:659.4399999999999px;transform:scaleX(1.0349);">schema_name</div>
<div id="t49" class="t " style="top:854px;font-size:24px;line-height:34px;color:#1f2329;left:911.24px;transform:scaleX(1.0368);">schema_size</div>
<svg class="a" style="left:1072px;top:860px" width="18" height="22" viewBox="0 0 18 22"><path d="M1 8.7 L9 1 L17 8.7 Z" fill="#c8c8c8"/><path d="M1 13 L9 20.7 L17 13 Z" fill="#3f5bd4"/></svg>
<div class="a" style="left:620px;top:900px;width:559px;height:2px;background:#e4e5ea"></div>
<div class="a" style="left:620px;top:950px;width:534px;height:2px;background:#e4e5ea"></div>
<div class="a" style="left:620px;top:1000px;width:534px;height:2px;background:#e4e5ea"></div>
<div class="a" style="left:620px;top:1050px;width:534px;height:2px;background:#e4e5ea"></div>
<div class="a" style="left:1153px;top:902px;width:2px;height:168px;background:#e4e5ea"></div>
<div class="a" style="left:1177px;top:902px;width:2px;height:168px;background:#e9ebef"></div>
<div class="a" style="left:1159px;top:908px;width:14px;height:36px;border-radius:7px;background:#c1c1c1"></div>
<div class="a" style="left:620px;top:902px;width:534px;height:168px;overflow:hidden">
<div class="a mono" style="left:41.5px;top:9px;font-size:24px;line-height:36px;color:#1f2329">znn_test</div>
<div class="a mono" style="left:293px;top:9px;font-size:24px;line-height:36px;color:#1f2329">1.55 MB</div>
<div class="a mono" style="left:41.5px;top:59px;font-size:24px;line-height:36px;color:#1f2329">ry-cloud</div>
<div class="a mono" style="left:293px;top:59px;font-size:24px;line-height:36px;color:#1f2329">992 KB</div>
<div class="a mono" style="left:41.5px;top:109px;font-size:24px;line-height:36px;color:#1f2329">bookstore_db</div>
<div class="a mono" style="left:293px;top:109px;font-size:24px;line-height:36px;color:#1f2329">640 KB</div>
<div class="a mono" style="left:41.5px;top:159px;font-size:24px;line-height:36px;color:#1f2329">ry-config</div>
<div class="a mono" style="left:293px;top:159px;font-size:24px;line-height:36px;color:#1f2329">480 KB</div>
</div>
<div class="a" style="left:0;top:1362px;width:1806px;height:16px;background:#fff;overflow:hidden"><div class="a" style="left:7px;top:8.3px;font-size:24px;line-height:30px;color:#8a8a8a;letter-spacing:-1px">使用</div><div class="a" style="left:60px;top:6px;width:34px;height:30px;border:2px solid #dcdcdc;border-radius:6px"></div><div class="a" style="left:104px;top:8.3px;font-size:24px;line-height:30px;color:#8a8a8a">/</div><div class="a" style="left:116px;top:6px;width:33px;height:30px;border:2px solid #dcdcdc;border-radius:6px"></div><div class="a" style="left:156px;top:8.3px;font-size:24px;line-height:30px;color:#8a8a8a;letter-spacing:-0.2px">查看前一条 / 后一条记录</div></div>
</div></body></html>
